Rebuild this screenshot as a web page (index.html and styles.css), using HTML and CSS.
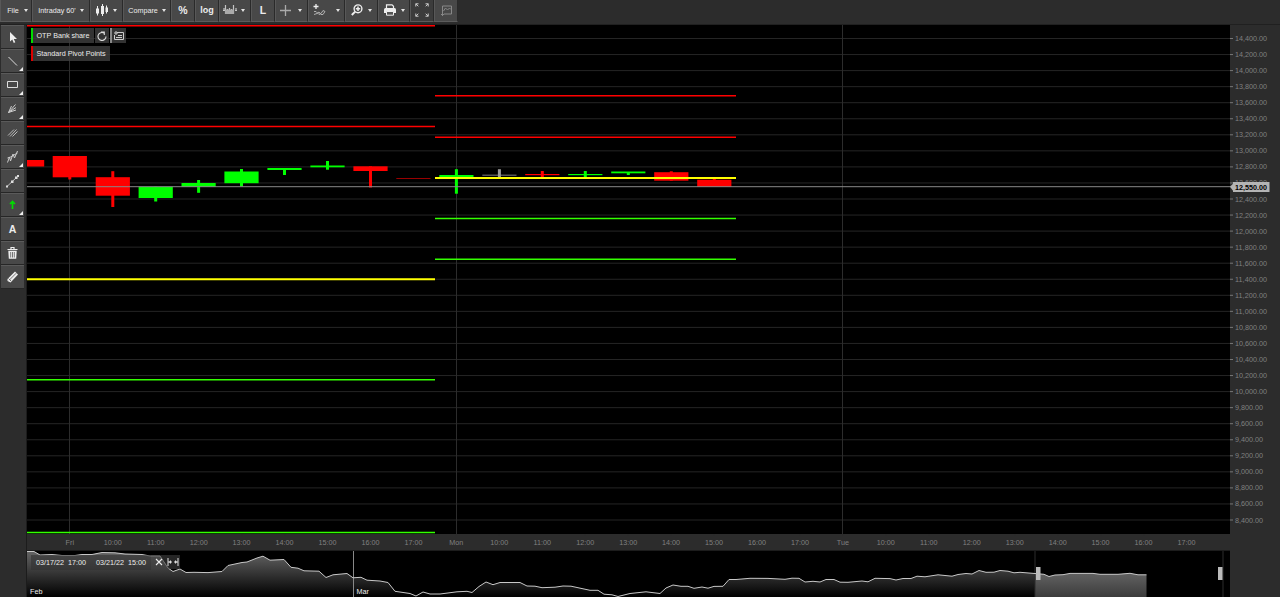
FILE: index.html
```
<!DOCTYPE html>
<html lang="en">
<head>
  <meta charset="UTF-8" />
  <title>OTP Bank share - Chart</title>
  <link rel="stylesheet" href="styles.css">
</head>
<body>
  <div class="toolbar">
    <button class="tool w-file">File <i class="caret"></i></button>
    <button class="tool w-period">Intraday 60' <i class="caret"></i></button>
    <button class="tool w-type">
      <svg width="14" height="14" viewBox="0 0 14 14"><path d="M2.500 3v9.500M7.500 1v12M11.500 2.500v8" stroke="#eee"/><path d="M1 5.500h3v5H1zM6 3h3v8H6zM10.500 4.500h2.500v4.500h-2.500z" fill="#eee"/></svg>
      <i class="caret"></i>
    </button>
    <button class="tool w-compare">Compare <i class="caret"></i></button>
    <button class="tool w-sq big">%</button>
    <button class="tool w-sq big log">log</button>
    <button class="tool w-bars">
      <svg width="14" height="12" viewBox="0 0 14 12"><path d="M0 6.500h2M2.500 1v9M4.500 5v5M6.500 4v6M8.500 5v5M10.500 1v9M12 6.500h2M13 4v3M1 4v3" stroke="#c4c4c4" stroke-width="1.200" fill="none"/><path d="M2 5.500h9v4.500H2z" fill="#aaa"/></svg>
      <i class="caret"></i>
    </button>
    <button class="tool w-l big">L</button>
    <button class="tool w-cross">
      <svg width="11" height="11" viewBox="0 0 11 11"><path d="M5.500 0v11M0 5.500h11" stroke="#aaa" stroke-width="1.300"/></svg>
      <i class="caret"></i>
    </button>
    <button class="tool w-ind">
      <svg width="14" height="12" viewBox="0 0 14 12"><path d="M3 0v5M.5 2.500h5" stroke="#eee" stroke-width="1.300"/><path d="M1 7.500h2l3 3 2-1 2-3 2 1M1 10.500l3-1 2-1.500 2 2.500h2l2-3" stroke="#bbb" stroke-width=".9" fill="none"/></svg>
      <i class="caret far"></i>
    </button>
    <button class="tool w-zoom">
      <svg width="12" height="12" viewBox="0 0 12 12"><circle cx="7" cy="4.800" r="3.900" stroke="#eee" stroke-width="1.400" fill="none"/><path d="M4.200 7.600L.8 11" stroke="#eee" stroke-width="2"/><path d="M7 2.600v4.400M4.800 4.800h4.400" stroke="#eee" stroke-width="1.500"/></svg>
      <i class="caret"></i>
    </button>
    <button class="tool w-print">
      <svg width="12" height="12" viewBox="0 0 12 12"><path d="M2.500 4V.8h5.500l1.500 1.500V4" fill="none" stroke="#eee" stroke-width="1.200"/><path d="M0 5.500Q0 4 1.500 4h9Q12 4 12 5.500V9H0z" fill="#eee"/><path d="M2.500 7.500h7v3.700h-7z" fill="#555" stroke="#eee"/></svg>
      <i class="caret"></i>
    </button>
    <button class="tool w-full">
      <svg width="14" height="14" viewBox="0 0 14 14"><path d="M.8 3.500V.8h2.700M.8.8l2.500 2.500M10.500.8h2.700v2.700M13.200.8l-2.500 2.500M.8 10.500v2.700h2.700M.8 13.200l2.500-2.500M13.200 10.500v2.700h-2.700M13.200 13.200l-2.500-2.500" stroke="#ccc" fill="none"/></svg>
    </button>
    <button class="tool w-sq">
      <svg width="11" height="11" viewBox="0 0 11 11"><path d="M1.500 9V1h9v8H3M0 9.500h3M1.500 8v3M2.500 6l2-3 2 2 2-2 1.500 1.500" stroke="#888" fill="none"/></svg>
    </button>
  </div>

  <div class="main">
    <div class="sidebar">
      <button class="side"><svg viewBox="0 0 23 23"><path d="M9 6v9.500l2.300-2 1.500 3.500 1.500-.7-1.500-3.300H16z" fill="#eee"/></svg></button>
      <button class="side more"><svg viewBox="0 0 23 23"><path d="M7.500 7l8.500 8.500" stroke="#ddd"/></svg></button>
      <button class="side more"><svg viewBox="0 0 23 23"><path d="M6.500 7.500h10v6h-10z" stroke="#ddd" fill="none"/></svg></button>
      <button class="side more"><svg viewBox="0 0 23 23"><path d="M7.500 14.500L10.500 8M7.500 14.500L14.500 6.500M7.500 14.500L15 9.500M7.500 14.500L15 12" stroke="#ccc"/></svg></button>
      <button class="side"><svg viewBox="0 0 23 23"><path d="M7 13.500l6-6M9 14.500l6.500-7M11.500 14.500l5-5" stroke="#bbb"/></svg></button>
      <button class="side more"><svg viewBox="0 0 23 23"><path d="M6.500 16.500l2-5.500 1 4 2.500-7 1.500 4 3-7M6.500 12l3-1 7-4" stroke="#ccc" fill="none"/></svg></button>
      <button class="side"><svg viewBox="0 0 23 23"><path d="M6 16.500L17 6" stroke="#ddd" stroke-width=".8"/><path d="M5 15.500h2v2H5zM10 10.500h2.500v2.500H10zM14 6.500h2.500V9H14zM16 5h2v2h-2z" fill="#ddd"/></svg></button>
      <button class="side more"><svg viewBox="0 0 23 23"><path d="M11.500 15V7.500M9 10L11.500 7.500l2.500 2.500" stroke="#0d0" stroke-width="1.700" fill="none"/></svg></button>
      <button class="side letter">A</button>
      <button class="side"><svg viewBox="0 0 23 23"><path d="M6.500 7.500h10M10 7V5.500h3V7" stroke="#eee" stroke-width="1.200" fill="none"/><path d="M7.300 8.700h8.400l-.5 8H7.800z" fill="#eee"/><path d="M9.700 10v5.500M11.500 10v5.500M13.300 10v5.500" stroke="#555" stroke-width=".8"/></svg></button>
      <button class="side"><svg viewBox="0 0 23 23"><path d="M6.500 13l7.500-7.500 3 3L9.500 16.500 6.500 15z" fill="#eee"/><path d="M8.200 14.200l7-7M7.500 12.500l2.500 2.500" stroke="#666" stroke-width=".9"/></svg></button>
    </div>

    <div class="charts">
      <div class="legend">
        <div class="legend-row">
          <span class="series up">OTP Bank share</span>
          <span class="mini"><svg width="10" height="10" viewBox="0 0 10 10"><path d="M7 2A4 4 0 1 0 9 5.500M4 1h3.300v3" stroke="#ddd" stroke-width="1.100" fill="none"/></svg></span>
          <span class="mini split"><svg width="10" height="10" viewBox="0 0 10 10"><path d="M3 1.500h6.500v7h-9V4M0 2h4M2 0v4M2 6.500h6M4 4.500h4" stroke="#ccc" fill="none"/></svg></span>
        </div>
        <div class="legend-row">
          <span class="series down">Standard Pivot Points</span>
        </div>
      </div>

      <svg class="price" width="1253" height="525" viewBox="27 25 1253 525">
        <rect x="27" y="25" width="1203" height="509" fill="#000"/>
        <g id="grid"></g>
        <g id="candles"></g>
        <g class="pivot r">
          <path d="M27 25.800H435M27 126.500H435M435 95.750H736M435 137.250H736"/>
        </g>
        <g class="pivot g">
          <path d="M27 379.750H435M27 532.500H435M435 218.500H736M435 259.250H736"/>
        </g>
        <g class="pivot y">
          <path d="M27 279.300H435M435 178.100H736"/>
        </g>
        <path class="last" d="M27 186.700H1232"/>
        <g id="labels"></g>
        <path d="M1230 186.700l3-3v-1.700h36.500v10H1233v-1.300z" fill="#b4b4b4"/>
        <text class="last-price" x="1235" y="189.500" textLength="32">12,550.00</text>
      </svg>

      <div class="navigator">
        <div class="range">
          <span class="date">03/17/22&nbsp; 17:00</span>
          <span class="date">03/21/22&nbsp; 15:00</span>
          <span class="close"><svg width="8" height="8" viewBox="0 0 8 8"><path d="M1 1l6 6M7 1L1 7" stroke="#eee" stroke-width="1.100"/></svg></span>
          <span class="fit"><svg width="12" height="8" viewBox="0 0 12 8"><path d="M1 0v8M11 0v8M1 4h4M7 4h4" stroke="#ddd"/><path d="M2 4l2-2v4zM10 4L8 2v4z" fill="#ddd"/></svg></span>
        </div>
        <svg width="1203" height="47" viewBox="27 550 1203 47">
          <defs>
            <linearGradient id="fade" gradientUnits="userSpaceOnUse" x1="0" y1="551" x2="0" y2="597">
              <stop offset="0" stop-color="#666"/>
              <stop offset="1" stop-color="#000"/>
            </linearGradient>
            <linearGradient id="fadeSel" gradientUnits="userSpaceOnUse" x1="0" y1="551" x2="0" y2="597">
              <stop offset="0" stop-color="#858585"/>
              <stop offset="1" stop-color="#3c3c3c"/>
            </linearGradient>
            <clipPath id="before"><rect x="27" y="550" width="1008" height="47"/></clipPath>
            <clipPath id="selected"><rect x="1035" y="550" width="112" height="47"/></clipPath>
          </defs>
          <rect x="27" y="550" width="1203" height="47" fill="#000"/>
          <path d="M27 550.500H1230" stroke="#1c1c1c"/>
          <path id="area" fill="url(#fade)" clip-path="url(#before)"/>
          <path id="areaSel" fill="url(#fadeSel)" clip-path="url(#selected)"/>
          <path d="M353.500 551v46" stroke="#888"/>
          <path d="M1035 551v46M1223 551v46" stroke="#2c2c2c"/>
          <path id="line" fill="none" stroke="#c8c8c8"/>
          <path d="M1036 567h4.500v13H1036zM1218 567h4.500v13H1218z" fill="#bbb"/>
          <text class="month" x="30" y="594">Feb</text>
          <text class="month" x="356.500" y="594">Mar</text>
        </svg>
      </div>
    </div>
  </div>

  <script src="chart.js"></script>
</body>
</html>
```
FILE: styles.css
```
* {
  box-sizing: border-box;
}

body {
  margin: 0;
  height: 597px;
  overflow: hidden;
  background: #2c2c2c;
  color: #ececec;
  font-family: "Liberation Sans", Arial, sans-serif;
  font-size: 7.2px;
}

button {
  padding: 0;
  border: none;
  background: none;
  color: inherit;
  font: inherit;
}

.toolbar {
  display: flex;
  height: 25px;
  border-bottom: 1px solid #202020;
}

.tool {
  display: flex;
  align-items: center;
  justify-content: center;
  gap: 5px;
  height: 22px;
  padding-bottom: 1px;
  background: #484848;
  border-right: 1px solid #2a2a2a;
  border-left: 1px solid #585858;
  border-bottom: 1px solid #5c5c5c;
  white-space: nowrap;
}

.tool svg {
  flex: none;
}

.w-file { width: 32px; padding-left: 3px; }
.w-period { width: 58px; gap: 4px; }
.w-type { width: 33px; gap: 4px; padding-right: 1px; }
.w-compare { width: 48px; gap: 4px; }
.w-sq { width: 24px; }
.w-bars { width: 32px; gap: 4px; padding-right: 2px; }
.w-l { width: 24px; }
.w-cross { width: 33px; gap: 7px; padding-right: 1px; }
.w-ind { width: 37px; }
.w-zoom { width: 33px; }
.w-print { width: 32px; }
.w-full { width: 24px; background: #3c3c3c; }

.tool.big {
  font-size: 10.5px;
  font-weight: bold;
}

.tool.log {
  font-size: 9px;
}

.caret {
  border: 2.5px solid transparent;
  border-top: 3px solid #e4e4e4;
  border-bottom: 0;
}

.far {
  margin-left: 4px;
}

.main {
  display: flex;
}

.sidebar {
  width: 27px;
  padding-left: 1px;
  border-right: 1px solid #1c1c1c;
}

.side {
  position: relative;
  display: flex;
  align-items: center;
  justify-content: center;
  width: 23px;
  height: 24px;
  background: #484848;
  border-top: 1px solid #5a5a5a;
  border-bottom: 1px solid #262626;
}

.side svg {
  width: 23px;
  height: 23px;
}

.more::after {
  content: "";
  position: absolute;
  right: 1px;
  bottom: 1px;
  border-left: 4px solid transparent;
  border-bottom: 4px solid #eee;
}

.letter {
  padding-bottom: 1px;
  font-size: 10.5px;
  font-weight: bold;
}

.charts {
  position: relative;
  width: 1253px;
}

.charts svg {
  display: block;
}

.legend {
  position: absolute;
  left: 4px;
  top: 3px;
}

.legend-row {
  display: flex;
  gap: 1px;
  height: 15px;
  margin-bottom: 3px;
}

.series {
  padding: 0 4px 0 3.5px;
  border-left: 2px solid;
  background: rgba(64, 64, 64, 0.8);
  line-height: 16px;
}

.up { border-color: #0d0; }
.down { border-color: #d00; }

.mini {
  display: flex;
  align-items: center;
  justify-content: center;
  width: 14px;
  background: rgba(64, 64, 64, 0.8);
}

.split {
  width: 16px;
  border-left: 2px solid #888;
}

text {
  font-size: 7.2px;
  fill: #808080;
}

.grid-h { stroke: #252525; }
.grid-v { stroke: #2c2c2c; }
.tick { stroke: #777; }
.last { stroke: #888; }

.pivot { fill: none; stroke-width: 1.5; }
.r { stroke: #f00; }
.g { stroke: #3f0; }
.y { stroke: #ff0; stroke-width: 2; }

.last-price {
  fill: #000;
  font-weight: bold;
}

.navigator {
  position: relative;
}

.range {
  position: absolute;
  left: 4px;
  top: 5px;
  display: flex;
  align-items: center;
  height: 14px;
}

.date {
  width: 60px;
  padding-left: 5px;
  line-height: 15px;
  background: rgba(50, 50, 50, 0.6);
}

.close,
.fit {
  display: flex;
  align-items: center;
  justify-content: center;
  width: 15px;
  height: 14px;
  background: rgba(64, 64, 64, 0.6);
}

.fit {
  width: 14px;
}

.month {
  fill: #eee;
}
```
FILE: chart.js
```
const NS = 'http://www.w3.org/2000/svg';

function add(parent, tag, attrs, text) {
  const el = document.createElementNS(NS, tag);
  for (const key in attrs) el.setAttribute(key, attrs[key]);
  if (text) el.textContent = text;
  document.getElementById(parent).appendChild(el);
}

// price axis
for (let i = 0; i <= 30; i++) {
  const y = 38.5 + i * 16.05;
  add('grid', 'path', { class: 'grid-h', d: `M27 ${y}H1230` });
  add('labels', 'path', { class: 'tick', d: `M1230 ${y}h3` });
  add('labels', 'text', { x: 1235, y: y + 2.5, textLength: i < 23 ? 32 : 28 }, (14400 - i * 200).toLocaleString('en-US') + '.00');
}

// time axis
const hours = ['10:00', '11:00', '12:00', '13:00', '14:00', '15:00', '16:00', '17:00'];
const times = ['Fri', ...hours, 'Mon', ...hours, 'Tue', ...hours];
times.forEach((label, i) => {
  const x = 69.8 + i * 42.95;
  if (i % 9 === 0) add('grid', 'path', { class: 'grid-v', d: `M${Math.floor(x) + 0.5} 25V534` });
  add('labels', 'path', { class: 'grid-v', d: `M${x} 534v2` });
  add('labels', 'text', { x, y: 544.5, 'text-anchor': 'middle' }, label);
});

// left, body top, body bottom, wick top, wick bottom, colour
const candles = [
  [10, 160, 166.5, 160, 166.5, '#f00'],
  [52.7, 156, 177.3, 156, 179.5, '#f00'],
  [95.7, 177.2, 195.7, 171.2, 207, '#f00'],
  [138.6, 186.7, 198, 186.7, 201.5, '#0f0'],
  [181.5, 183, 187, 180, 192.8, '#0f0'],
  [224.4, 171.5, 183.2, 169, 186.5, '#0f0'],
  [267.4, 168, 170, 168, 175, '#0f0'],
  [310.4, 165.5, 167.3, 161, 169.7, '#0f0'],
  [353.4, 166.3, 171, 166.3, 187.5, '#f00'],
  [396.3, 178, 179, 178, 179, '#900'],
  [439.3, 175, 178, 169.2, 193.7, '#0f0'],
  [482.3, 174.5, 176, 169.2, 177.5, '#555'],
  [525.2, 174, 175.2, 171, 177, '#f00'],
  [568.2, 174, 175.2, 171, 177, '#0f0'],
  [611.2, 171.5, 173.3, 172, 175, '#0f0'],
  [654.2, 172.2, 180.7, 171.3, 180.7, '#f00'],
  [697.2, 179.7, 187, 179, 187, '#f00']
];
candles.forEach(([x, top, bottom, high, low, fill]) => {
  add('candles', 'rect', { x, y: top, width: 34.2, height: bottom - top, fill });
  if (low - high > bottom - top) {
    add('candles', 'rect', { x: x + 15.6, y: high, width: 3, height: low - high, fill: fill === '#555' ? '#999' : fill });
  }
});

// navigator history
const history = [
  27, 551.5, 34, 551.5, 40, 555, 52, 554.5, 62, 555.5, 75, 555.5, 82, 554.5, 92, 554.5, 102, 552.5, 115, 552.8,
  125, 554, 142, 554.5, 150, 556, 160, 556, 168, 568, 173, 571.5, 180, 569, 186, 572.5, 194, 572.3, 208, 572.6,
  222, 571.5, 228, 565.5, 242, 562.5, 247, 562, 257, 558, 263, 556.2, 270, 560.2, 284, 559.5, 291, 567.3, 298, 568.2,
  304, 570.8, 319, 571.2, 326, 577.5, 333, 574.8, 347, 573.5, 353, 577.8, 361, 577.3, 367, 580.2, 380, 581, 388, 582.5,
  395, 591.3, 410, 593.5, 416, 596, 423, 592, 430, 594, 440, 594, 457, 591.8, 467, 591.3, 472, 592.5, 479, 586.5,
  486, 582, 493, 584.7, 500, 582.5, 520, 582.5, 527, 586, 535, 586.2, 542, 587.7, 555, 587.2, 563, 586, 571, 586.2,
  590, 590.3, 598, 590.3, 604, 594.2, 612, 594.8, 618, 596.5, 630, 593.5, 646, 591.8, 660, 593.5, 666, 588, 673, 585,
  681, 586.3, 688, 586.3, 694, 588.3, 702, 587, 708, 588.2, 714, 586.4, 723, 586.3, 729, 579.5, 736, 579.5, 750, 578.3,
  768, 578.4, 785, 579.3, 792, 578.2, 799, 578.3, 805, 582, 813, 581.3, 820, 582, 826, 579.5, 834, 579.5, 840, 582.2,
  848, 582.3, 862, 581, 868, 581.8, 875, 578.3, 890, 578.6, 896, 580, 903, 578.5, 911, 578.5, 917, 576.2, 925, 576.8,
  938, 574.8, 952, 576.2, 958, 574.5, 966, 573.5, 972, 574, 979, 570.5, 986, 572.3, 994, 572.2, 1000, 570.5, 1008, 571.2,
  1014, 572.8, 1020, 572.3, 1035, 573.5, 1044, 574.3, 1049, 576.5, 1055, 575, 1063, 574.7, 1070, 573.4, 1093, 573.4,
  1100, 574.3, 1118, 574.3, 1130, 573.3, 1138, 574.8, 1146.5, 574.8
];
const line = 'M' + history.join(' ');
document.getElementById('line').setAttribute('d', line);
document.getElementById('area').setAttribute('d', line + 'V597H27Z');
document.getElementById('areaSel').setAttribute('d', line + 'V597H27Z');
```
